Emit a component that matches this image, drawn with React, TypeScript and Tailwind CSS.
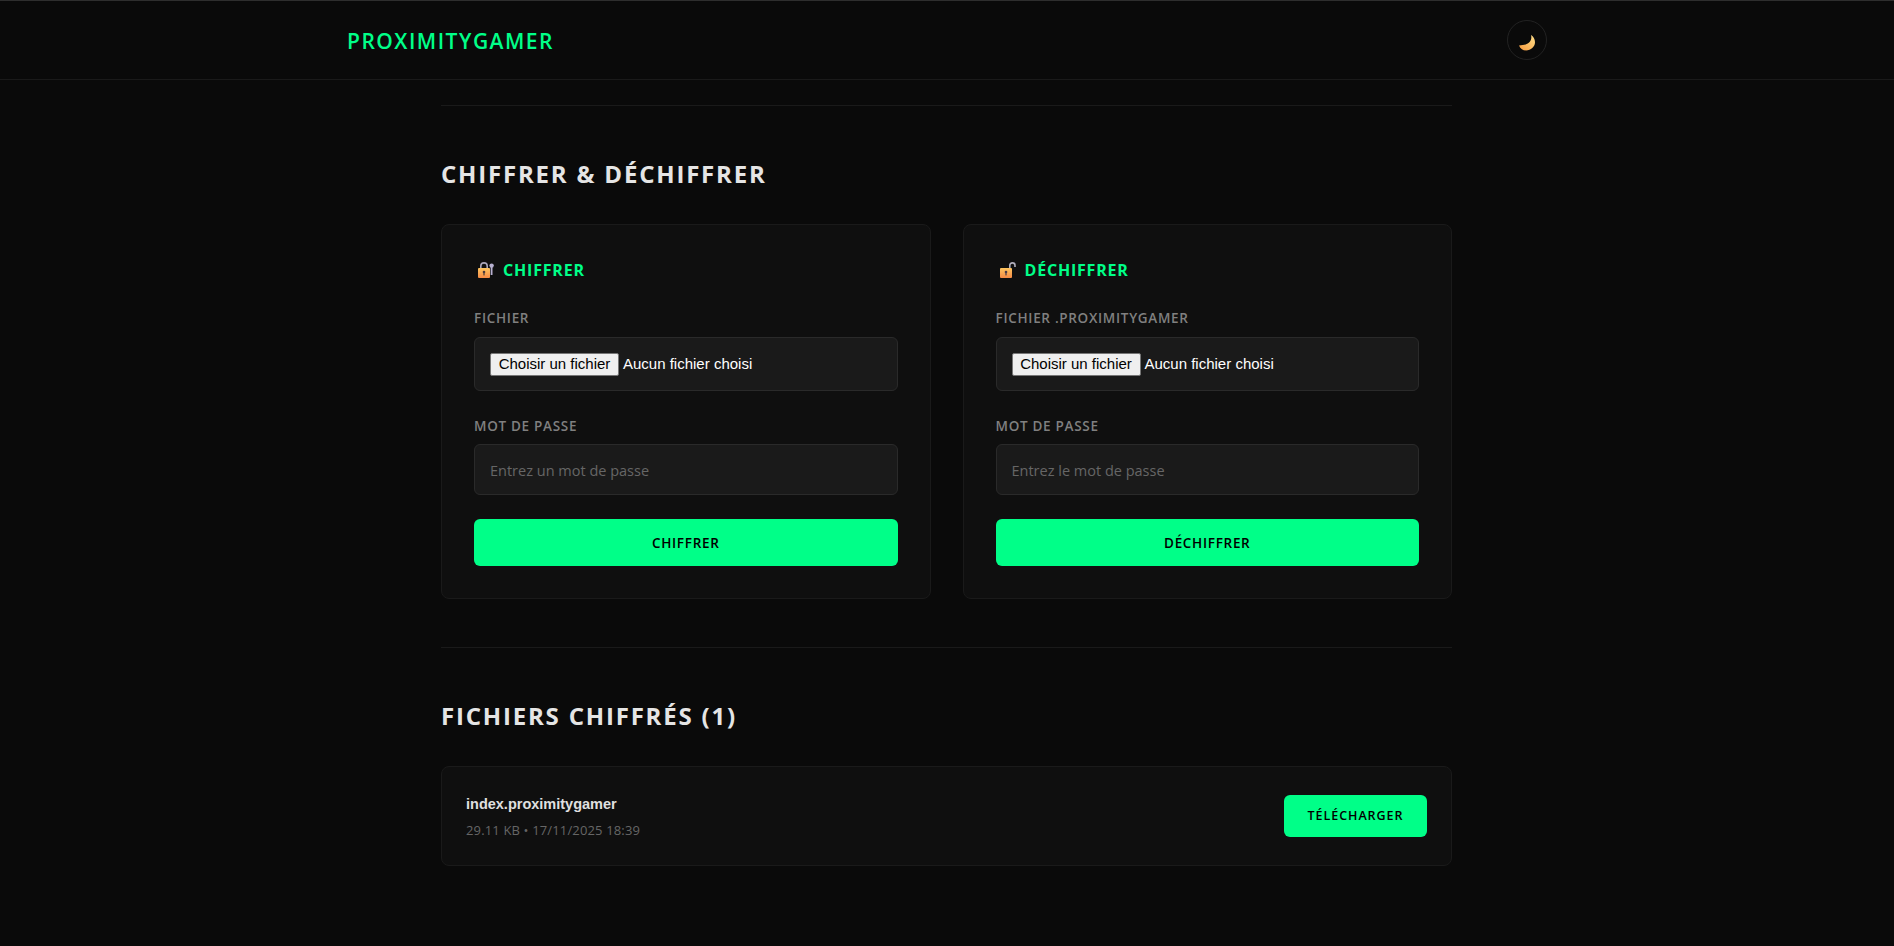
const sans = "font-['Open_Sans','Noto_Sans',sans-serif]";

function Moon() {
  return (
    <svg width="18" height="18" viewBox="0 0 18 18" className="translate-y-[3px]">
      <defs>
        <linearGradient id="moon" x1="1" y1="0" x2="0" y2="1">
          <stop offset="0" stopColor="#ffe08a" />
          <stop offset="1" stopColor="#f79a3e" />
        </linearGradient>
      </defs>
      <path d="M13 1C13.8 3.6 13.2 6.2 11.6 8 9.4 10.4 5.4 11.4 1 11.4 2.4 14.6 5 16.4 8 16.4c4.8 0 9-3.6 9-8.2C17 5 15.4 2.6 13 1z" fill="url(#moon)" />
    </svg>
  );
}

function LockedIcon() {
  return (
    <svg width="16" height="16" viewBox="0 0 16 16">
      <defs>
        <linearGradient id="lockA" x1="0" y1="0" x2="0" y2="1">
          <stop offset="0" stopColor="#fdc55f" />
          <stop offset="1" stopColor="#f58a45" />
        </linearGradient>
      </defs>
      <path d="M2.8 7V4C2.8 2 4 .9 6 .9S9.2 2 9.2 4V7" fill="none" stroke="#a9a5b8" strokeWidth="1.6" />
      <circle cx="13.6" cy="3.6" r="2.2" fill="#b7b0d0" />
      <rect x="12.7" y="4" width="1.8" height="9" fill="#b7b0d0" />
      <rect x="0" y="6" width="12" height="10" rx="1" fill="url(#lockA)" />
      <circle cx="6" cy="10" r="1.3" fill="#4a3a3a" />
      <rect x="5.4" y="10" width="1.2" height="3.4" fill="#4a3a3a" />
    </svg>
  );
}

function UnlockedIcon() {
  return (
    <svg width="16" height="16" viewBox="0 0 16 16">
      <defs>
        <linearGradient id="lockB" x1="0" y1="0" x2="0" y2="1">
          <stop offset="0" stopColor="#fdc55f" />
          <stop offset="1" stopColor="#f58a45" />
        </linearGradient>
      </defs>
      <path d="M9.8 7V3.4C9.8 1.8 10.8.9 12.4.9S15 1.8 15 3.4V5" fill="none" stroke="#b0adba" strokeWidth="1.6" />
      <rect x="0" y="6" width="12" height="10" rx="1" fill="url(#lockB)" />
      <circle cx="6" cy="10" r="1.3" fill="#4a3a4a" />
      <rect x="5.4" y="10" width="1.2" height="3.4" fill="#4a3a4a" />
    </svg>
  );
}

function FileInput() {
  return (
    <div className="flex h-[54px] items-center rounded-md border border-[#2a2a2a] bg-[#1a1a1a] px-[15px] font-['Liberation_Sans',sans-serif] text-[15px] text-white">
      <span className="flex h-[23px] w-[129px] items-center justify-center rounded-[2px] border border-[#767676] bg-[#efefef] text-black">
        Choisir un fichier
      </span>
      <span className="ml-[4px]">Aucun fichier choisi</span>
    </div>
  );
}

type CardProps = {
  icon: React.ReactNode;
  title: string;
  fileLabel: string;
  placeholder: string;
};

function Card({ icon, title, fileLabel, placeholder }: CardProps) {
  return (
    <div className="flex-1 rounded-lg border border-[#1a1a1a] bg-[#0f0f0f] p-8">
      <h3 className="flex h-[26px] items-center text-base font-bold tracking-[0.8px] text-[#00ff88]">
        <span className="ml-[4px] mr-[9px] flex">{icon}</span>
        {title}
      </h3>
      <label className="mt-[26px] block text-[13.5px] leading-[18px] font-semibold tracking-[0.7px] text-[#808080]">
        {fileLabel}
      </label>
      <div className="mt-[10px]">
        <FileInput />
      </div>
      <label className="mt-[26px] block text-[13.5px] leading-[18px] font-semibold tracking-[0.7px] text-[#808080]">
        MOT DE PASSE
      </label>
      <input
        placeholder={placeholder}
        readOnly
        className="mt-[9px] block h-[51px] w-full rounded-md border border-[#2a2a2a] bg-[#1a1a1a] px-[15px] pt-[2px] text-[14.5px] outline-none placeholder:text-[#666666]"
      />
      <button className="mt-6 block h-[47px] w-full rounded-md bg-[#00ff88] pt-[2px] text-[13.5px] font-semibold tracking-[0.7px] text-black">
        {title}
      </button>
    </div>
  );
}

export default function App() {
  return (
    <div className={`${sans} h-[946px] overflow-hidden bg-[#0a0a0a]`}>
      <header className="h-[80px] border-t border-b border-t-[#2e2e2e] border-b-[#1a1a1a]">
        <div className="mx-auto flex h-full w-[1200px] items-center justify-between">
          <span className="translate-y-[2px] text-[21px] font-semibold tracking-[1.5px] text-[#00ff88]">PROXIMITYGAMER</span>
          <div className="flex h-10 w-10 items-center justify-center rounded-full border border-[#222222]">
            <Moon />
          </div>
        </div>
      </header>
      <main className="ml-[441px] w-[1011px]">
        <div className="mt-[25px] border-t border-[#1a1a1a]" />
        <h2 className="mt-[50px] text-2xl leading-[36px] font-bold tracking-[1.8px] text-[#e5e5e5]">
          CHIFFRER &amp; DÉCHIFFRER
        </h2>
        <div className="mt-[32px] flex gap-8">
          <Card icon={<LockedIcon />} title="CHIFFRER" fileLabel="FICHIER" placeholder="Entrez un mot de passe" />
          <Card icon={<UnlockedIcon />} title="DÉCHIFFRER" fileLabel="FICHIER .PROXIMITYGAMER" placeholder="Entrez le mot de passe" />
        </div>
        <div className="mt-[48px] border-t border-[#1a1a1a]" />
        <h2 className="mt-[50px] text-2xl leading-[36px] font-bold tracking-[1.8px] text-[#e5e5e5]">
          FICHIERS CHIFFRÉS (1)
        </h2>
        <div className="mt-[32px] flex h-[100px] items-center justify-between rounded-lg border border-[#1a1a1a] bg-[#0f0f0f] px-[24px]">
          <div>
            <div className="font-['Liberation_Sans',sans-serif] text-[14.5px] leading-[20px] font-bold text-[#e0e0e0]">
              index.proximitygamer
            </div>
            <div className="mt-[7px] text-[13px] leading-[18px] tracking-[0.15px] text-[#666666]">29.11 KB • 17/11/2025 18:39</div>
          </div>
          <button className="h-[42px] w-[143px] rounded-md bg-[#00ff88] pt-[1px] text-[12.5px] font-semibold tracking-[0.96px] text-black">
            TÉLÉCHARGER
          </button>
        </div>
      </main>
    </div>
  );
}
